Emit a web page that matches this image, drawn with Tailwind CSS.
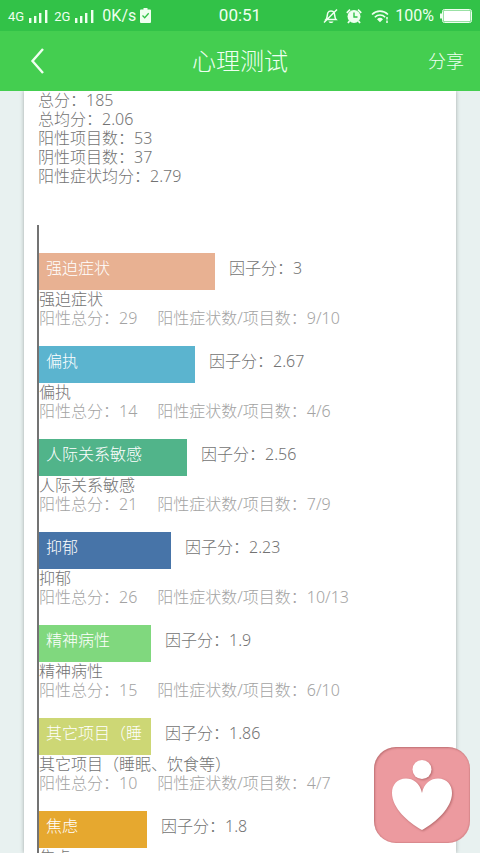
<!DOCTYPE html>
<html lang="zh-CN">
<head>
    <meta charset="UTF-8">
    <meta name="viewport" content="width=device-width, initial-scale=1.0">
    <title>心理测试</title>
    <script src="https://cdn.jsdelivr.net/npm/@tailwindcss/browser@4"></script>
</head>
<body class="h-screen overflow-hidden flex flex-col bg-[#e8f1f0] font-['Noto_Sans','Noto_Sans_CJK_SC',sans-serif] font-light text-base text-[#737373]">
    <header class="relative z-10 shrink-0 bg-[#44ce50] text-[#effff0]">
        <!-- status bar -->
        <div class="h-[31px] grid grid-cols-[1fr_auto_1fr] items-center px-2 bg-[#32c248] font-['Roboto','Noto_Sans_CJK_SC',sans-serif] font-normal">
            <div class="flex items-center">
                <span class="text-[13px] pt-[2px]">4G</span>
                <svg class="ml-1 w-5 h-4" viewBox="0 0 20 16" fill="currentColor"><path d="M1 10h2.400v5H1zM6 8h2.400v7H6zM11 5h2.400v10H11zM17 2h2.400v13H17z"/></svg>
                <span class="ml-[6px] text-[13px] pt-[2px]">2G</span>
                <svg class="ml-1 w-5 h-4" viewBox="0 0 20 16" fill="currentColor"><path d="M1 10h2.400v5H1zM6 8h2.400v7H6zM11 5h2.400v10H11zM17 2h2.400v13H17z"/></svg>
                <span class="ml-2 text-base leading-5">0K/s</span>
                <svg class="ml-1 w-[11px] h-[15px]" viewBox="0 0 11 15"><path fill="currentColor" d="M3.500 0h4v1.500H10q1 0 1 1V14q0 1-1 1H1q-1 0-1-1V2.500q0-1 1-1h2.500z"/><path d="M2.500 7.500l2.200 2.200 4-4.500" fill="none" stroke="#32c248" stroke-width="1.300"/></svg>
            </div>
            <span class="text-[17px]">00:51</span>
            <div class="flex items-center justify-end">
                <svg class="w-4 h-4" viewBox="0 0 16 16" fill="none" stroke="currentColor" stroke-width="1.500"><path d="M3 11.500c1.500-1.500 1-5 2-7 1-2 5-2 6 0s.5 5.500 2 7zM1 14.500L14 1.500"/><path d="M5.500 13.500h5c-1 2-4 2-5 0z" fill="currentColor" stroke="none"/></svg>
                <svg class="ml-[7px] w-4 h-4" viewBox="0 0 16 16"><circle cx="8" cy="8.500" r="6.500" fill="currentColor"/><path d="M.8 4.800L4 1.600M15.200 4.800L12 1.600M3.500 13l-1.500 2M12.500 13l1.500 2" stroke="currentColor" stroke-width="1.800"/><path d="M8 4.500V9h3.500" fill="none" stroke="#32c248" stroke-width="1.400"/></svg>
                <svg class="ml-[9px] w-[19px] h-4" viewBox="0 0 19 16" fill="none" stroke="currentColor" stroke-width="1.600"><path d="M1 6.500c4.500-4.500 11.500-4.500 16 0M3.800 9.300c3-3 7.400-3 10.400 0"/><path d="M6 11.200c2-1.800 4-1.800 6 0l-3 3z" fill="currentColor" stroke="none"/><path d="M16 9v2.500M16 12.500V15" stroke-width="1.500"/></svg>
                <span class="ml-[5px] text-base leading-5">100%</span>
                <svg class="ml-[6px] w-8 h-[14px]" viewBox="0 0 32 14"><path d="M0 4.500h2v5H0z" fill="currentColor"/><rect x="2.500" y=".5" width="29" height="13" rx="2" fill="none" stroke="currentColor"/><rect x="3.500" y="1.500" width="27" height="11" rx="1" fill="#fff"/></svg>
            </div>
        </div>
        <nav class="h-[60px] grid grid-cols-[1fr_auto_1fr] items-center pl-[30px] pr-4">
            <button type="button" aria-label="返回" class="w-4 h-7">
                <svg class="w-4 h-7" viewBox="0 0 16 28" fill="none" stroke="currentColor" stroke-width="2.400"><path d="M13 2L2.500 14 13 26"/></svg>
            </button>
            <h1 class="text-2xl pr-[14px]">心理测试</h1>
            <button type="button" class="justify-self-end text-lg">分享</button>
        </nav>
    </header>

    <main class="flex-1 min-h-0 mx-6 pl-[13px] overflow-hidden bg-white shadow-[0_0_4px_rgba(0,0,0,0.3)]">
        <div class="pl-px leading-[19px]">
            <p>总分：185</p>
            <p>总均分：2.06</p>
            <p>阳性项目数：53</p>
            <p>阴性项目数：37</p>
            <p>阳性症状均分：2.79</p>
        </div>

        <!-- factor chart -->
        <div class="mt-[39px] pt-7 border-l-2 border-[#737373] leading-[19px] space-y-[18px]">
            <section>
                <div class="flex h-[37px]">
                    <div class="w-[176px] pt-[6px] px-[7px] bg-[#e8b192] text-white">强迫症状</div>
                    <p class="pt-[6px] pl-[14px]">因子分：3</p>
                </div>
                <h2>强迫症状</h2>
                <p class="flex gap-5 text-[#a3a3a3]"><span>阳性总分：29</span><span>阳性症状数/项目数：9/10</span></p>
            </section>
            <section>
                <div class="flex h-[37px]">
                    <div class="w-[156px] pt-[6px] px-[7px] bg-[#5bb4cf] text-white">偏执</div>
                    <p class="pt-[6px] pl-[14px]">因子分：2.67</p>
                </div>
                <h2>偏执</h2>
                <p class="flex gap-5 text-[#a3a3a3]"><span>阳性总分：14</span><span>阳性症状数/项目数：4/6</span></p>
            </section>
            <section>
                <div class="flex h-[37px]">
                    <div class="w-[148px] pt-[6px] px-[7px] bg-[#51b48a] text-white">人际关系敏感</div>
                    <p class="pt-[6px] pl-[14px]">因子分：2.56</p>
                </div>
                <h2>人际关系敏感</h2>
                <p class="flex gap-5 text-[#a3a3a3]"><span>阳性总分：21</span><span>阳性症状数/项目数：7/9</span></p>
            </section>
            <section>
                <div class="flex h-[37px]">
                    <div class="w-[132px] pt-[6px] px-[7px] bg-[#4774a8] text-white">抑郁</div>
                    <p class="pt-[6px] pl-[14px]">因子分：2.23</p>
                </div>
                <h2>抑郁</h2>
                <p class="flex gap-5 text-[#a3a3a3]"><span>阳性总分：26</span><span>阳性症状数/项目数：10/13</span></p>
            </section>
            <section>
                <div class="flex h-[37px]">
                    <div class="w-[112px] pt-[6px] px-[7px] bg-[#80d87e] text-white">精神病性</div>
                    <p class="pt-[6px] pl-[14px]">因子分：1.9</p>
                </div>
                <h2>精神病性</h2>
                <p class="flex gap-5 text-[#a3a3a3]"><span>阳性总分：15</span><span>阳性症状数/项目数：6/10</span></p>
            </section>
            <section>
                <div class="flex h-[37px]">
                    <div class="w-[112px] pt-[6px] px-[7px] bg-[#cdd775] text-white">其它项目（睡</div>
                    <p class="pt-[6px] pl-[14px]">因子分：1.86</p>
                </div>
                <h2>其它项目（睡眠、饮食等）</h2>
                <p class="flex gap-5 text-[#a3a3a3]"><span>阳性总分：10</span><span>阳性症状数/项目数：4/7</span></p>
            </section>
            <section>
                <div class="flex h-[37px]">
                    <div class="w-[108px] pt-[6px] px-[7px] bg-[#e6a82f] text-white">焦虑</div>
                    <p class="pt-[6px] pl-[14px]">因子分：1.8</p>
                </div>
                <h2>焦虑</h2>
            </section>
        </div>
    </main>

    <button type="button" aria-label="心理咨询" class="fixed right-[10px] bottom-[10px] size-24 rounded-[22px] bg-[#ec9a9f] shadow-[inset_1px_1px_2px_rgba(120,50,50,0.4),inset_-1px_-1px_1px_rgba(160,80,80,0.2)]">
        <svg class="size-24 drop-shadow-[1px_1px_1px_rgba(130,60,60,0.5)]" viewBox="0 0 96 96" fill="#fff">
            <circle cx="48" cy="22.500" r="9.500"/>
            <path d="M48 46C46 36 39 31.500 32 31.500C23 31.500 18 38 18 46C18 61 34 75 48 83C62 75 78 61 78 46C78 38 73 31.500 64 31.500C57 31.500 50 36 48 46z"/>
        </svg>
    </button>
</body>
</html>
